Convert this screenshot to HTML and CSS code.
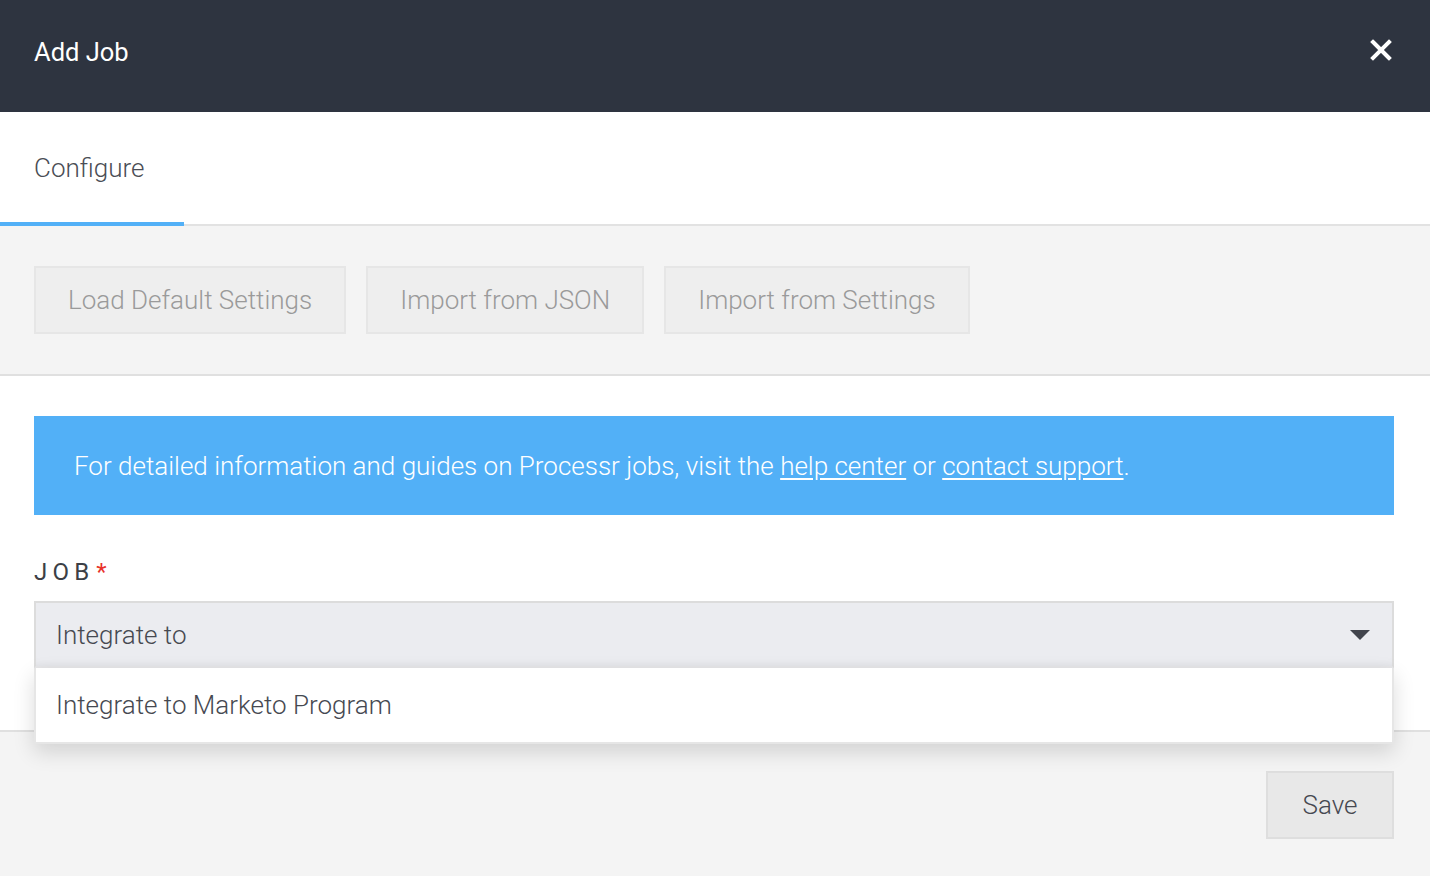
FILE: index.html
```html
<!DOCTYPE html>
<html>
<head>
<meta charset="utf-8">
<link rel="stylesheet" href="styles.css">
</head>
<body>
<div class="modal">
  <header class="header">
    <div class="title">Add Job</div>
    <button class="close" aria-label="Close">
      <svg width="22" height="22" viewBox="0 0 22 22"><path d="M3 3 L19 19 M19 3 L3 19" stroke="#fff" stroke-width="4" stroke-linecap="square"/></svg>
    </button>
  </header>
  <nav class="tabs">
    <div class="tab active">Configure</div>
  </nav>
  <div class="toolbar">
    <button class="btn">Load Default Settings</button>
    <button class="btn">Import from JSON</button>
    <button class="btn">Import from Settings</button>
  </div>
  <main class="content">
    <div class="banner"><p>For detailed information and guides on Processr jobs, visit the <a href="#">help center</a> or <a href="#">contact support</a>.</p></div>
    <label class="label">JOB<span class="req">*</span></label>
    <div class="select-wrap">
      <div class="select">
        <span>Integrate to</span>
        <span class="caret"></span>
      </div>
      <div class="menu">
        <div class="option">Integrate to Marketo Program</div>
      </div>
    </div>
  </main>
  <footer class="footer">
    <button class="btn save">Save</button>
  </footer>
</div>
</body>
</html>
```
FILE: styles.css
```css
* { box-sizing: border-box; }
html, body { margin: 0; padding: 0; }
body {
  font-family: Roboto, "Liberation Sans", sans-serif;
  font-size: 26px;
  background: #f4f4f4;
  color: #464951;
  width: 1430px;
  height: 876px;
  overflow: hidden;
}
.modal { display: flex; flex-direction: column; height: 876px; }
.header {
  height: 112px;
  background: #2e3440;
  display: flex;
  align-items: center;
  justify-content: space-between;
  padding: 0 38px 8px 34px;
}
.title { color: #fff; font-weight: 400; font-size: 25.5px; }
.close {
  background: none; border: 0; padding: 0; margin-bottom: 4px;
  width: 22px; height: 22px; cursor: pointer;
  display: flex;
}
.tabs {
  height: 114px;
  background: #fff;
  border-bottom: 2px solid #e2e2e2;
  display: flex;
}
.tab {
  width: 184px;
  padding: 2px 34px 0;
  display: flex;
  align-items: center;
  color: #4a4d55;
  font-weight: 300;
  font-size: 26px;
  margin-bottom: -2px;
}
.tab.active { border-bottom: 4px solid #52b0f7; }
.toolbar {
  height: 150px;
  background: #f4f4f4;
  border-bottom: 2px solid #e0e0e0;
  display: flex;
  align-items: flex-start;
  gap: 20px;
  padding: 40px 34px 0;
}
.btn {
  font-family: inherit;
  font-size: 26px;
  font-weight: 300;
  height: 68px;
  padding: 0 32px;
  background: #eeeeee;
  border: 2px solid #e6e6e6;
  color: #9a9a9a;
  border-radius: 0;
}
.content {
  background: #fff;
  padding: 40px 36px 62px 34px;
}
.banner {
  background: #52b0f7;
  color: #fff;
  height: 99px;
  padding: 0 40px;
  display: flex;
  align-items: center;
  font-weight: 300;
}
.banner p { margin: 0; }
.banner a { color: #fff; text-decoration: underline; text-underline-offset: 3px; }
.label {
  display: block;
  margin-top: 43px;
  height: 43px;
  font-size: 24px;
  letter-spacing: 5.2px;
  color: #3c3f46;
  font-weight: 400;
}
.req { color: #e8322a; letter-spacing: 0; margin-left: 2px; }
.select-wrap { position: relative; }
.select {
  height: 67px;
  background: #ebecf0;
  border: 2px solid #dcdcdc;
  border-bottom-color: #e6e6e8;
  display: flex;
  align-items: center;
  justify-content: space-between;
  padding: 0 22px 0 20px;
  font-weight: 300;
  color: #464951;
  box-shadow: inset 0 -6px 8px -6px rgba(0,0,0,0.06);
}
.caret {
  width: 0; height: 0;
  border-left: 10px solid transparent;
  border-right: 10px solid transparent;
  border-top: 10px solid #41444c;
}
.menu {
  position: absolute;
  left: 0; right: 0; top: 67px;
  background: #fff;
  border: 2px solid #e6e6e6;
  border-top: 0;
  box-shadow: 0 8px 20px rgba(0,0,0,0.14);
  z-index: 2;
}
.option {
  height: 74px;
  display: flex;
  align-items: center;
  padding: 0 20px;
  font-weight: 300;
  color: #464951;
}
.footer {
  flex: 1;
  background: #f4f4f4;
  border-top: 2px solid #e0e0e0;
  display: flex;
  justify-content: flex-end;
  align-items: flex-start;
  padding: 39px 36px 0 34px;
}
.save {
  width: 128px;
  height: 68px;
  padding: 0;
  color: #464951;
  background: #e8e8e8;
  border-color: #dedede;
}
```
